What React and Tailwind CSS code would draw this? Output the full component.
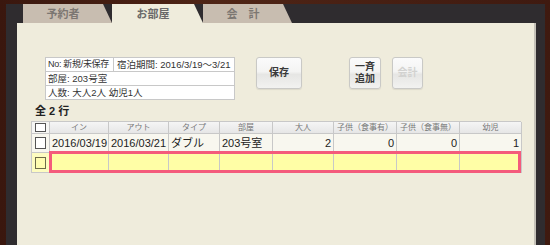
import React from "react";

const font = { fontFamily: '"Liberation Sans", "Noto Sans CJK JP", sans-serif' };

function Tab({ children, active, className = "" }) {
  return (
    <div
      className={
        "h-[19px] flex items-center justify-center text-[11px] font-bold [clip-path:polygon(0_0,calc(100%-9px)_0,100%_100%,0_100%)] " +
        (active ? "bg-[#efecdc] text-[#6a6a6a] " : "bg-[#c8bdb0] text-[#7c7772] ") +
        className
      }
    >
      <span className="pr-[9px] pt-[1px]">{children}</span>
    </div>
  );
}

function Btn({ children, disabled, className = "" }) {
  return (
    <div
      className={
        "h-[32px] flex flex-col items-center justify-center rounded-[3px] border border-[#c9c9c6] bg-[linear-gradient(#fbfbfb_0%,#f4f4f3_45%,#e6e6e4_55%,#f2f2f0_100%)] text-[10px] font-bold leading-[12px] shadow-[0_1px_1px_rgba(0,0,0,0.08)] " +
        (disabled ? "text-[#d2d2d0] " : "text-[#3a3a3a] ") +
        className
      }
    >
      {children}
    </div>
  );
}

function Check({ yellow }) {
  return (
    <div
      className={
        "w-[11px] h-[12px] border " +
        (yellow ? "border-[#6d6b4a] bg-[#fffdb0]" : "border-[#555] bg-white")
      }
    />
  );
}

const cols = "grid grid-cols-[18px_59px_60px_51px_53px_61px_63px_63px_62px]";
const headers = ["イン", "アウト", "タイプ", "部屋", "大人", "子供（食事有）", "子供（食事無）", "幼児"];
const row = [
  { t: "2016/03/19", r: false },
  { t: "2016/03/21", r: false },
  { t: "ダブル", r: false },
  { t: "203号室", r: false },
  { t: "2", r: true },
  { t: "0", r: true },
  { t: "0", r: true },
  { t: "1", r: true },
];

export default function App() {
  return (
    <div style={font} className="w-[550px] h-[245px] overflow-hidden bg-[linear-gradient(90deg,#3a170e,#4f2516_40%,#3f1a10)] pt-[4px] pl-[6px] pr-[5px]">
      <div className="h-[300px] bg-[#2f2c2f] flex flex-col pr-[9px]">
        <div className="flex pl-[17px] h-[19px] shrink-0">
          <Tab className="w-[89px]">予約者</Tab>
          <Tab active className="w-[91px]">お部屋</Tab>
          <Tab className="w-[89px]">会　計</Tab>
        </div>
        <div className="ml-[11px] flex-1 bg-[#efecdc] border-r-2 border-[#c4c1b8] pl-[14px] pt-[34px]">
          <div className="flex items-start ml-[14px]">
            <div className="w-[190px] border border-[#c8c8c8] bg-white text-[9.5px] text-[#333] leading-[13px]">
              <div className="flex border-b border-[#c8c8c8] h-[14px]">
                <div className="w-[68px] border-r border-[#c8c8c8] pl-[2px] whitespace-nowrap text-[9px] tracking-[-0.3px]">No: 新規/未保存</div>
                <div className="flex-1 pl-[3px] whitespace-nowrap overflow-hidden">宿泊期間: 2016/3/19～3/21</div>
              </div>
              <div className="border-b border-[#c8c8c8] h-[14px] pl-[2px]">部屋: 203号室</div>
              <div className="h-[13px] pl-[2px]">人数: 大人2人 幼児1人</div>
            </div>
            <Btn className="ml-[21px] w-[46px]">保存</Btn>
            <Btn className="ml-[47px] w-[32px]">
              <span>一斉</span>
              <span>追加</span>
            </Btn>
            <Btn disabled className="ml-[11px] w-[31px]">会計</Btn>
          </div>
          <div className="mt-[4px] h-[14px] leading-[14px] pl-[4px] text-[11px] font-bold text-[#222] whitespace-pre">全 2 行</div>
          <div className="relative mt-[3px] w-[490px]">
            <div className={cols + " border-l border-t border-[#c8c8c8]"}>
              <div className="h-[12px] border-r border-b border-[#c8c8c8] bg-[#f6f6f4] flex items-center justify-center">
                <div className="w-[11px] h-[9px] border border-[#555] bg-white" />
              </div>
              {headers.map((h) => (
                <div key={h} className="h-[12px] border-r border-b border-[#c8c8c8] bg-[linear-gradient(#f5f5f5,#e6e6e6)] text-[8px] leading-[11px] text-[#777] text-center whitespace-nowrap overflow-hidden">
                  {h}
                </div>
              ))}
              <div className="h-[19px] border-r border-b border-[#c8c8c8] bg-[#f8f7ef] flex items-center justify-center">
                <Check />
              </div>
              {row.map((c, i) => (
                <div
                  key={i}
                  className={
                    "h-[19px] border-r border-b border-[#c8c8c8] bg-[#f8f7ef] text-[11px] leading-[18px] text-[#222] px-[2px] whitespace-nowrap overflow-hidden " +
                    (c.r ? "text-right" : "text-left")
                  }
                >
                  {c.t}
                </div>
              ))}
              <div className="h-[20px] border-r border-b border-[#c8c8c8] bg-[#fdfcc0] flex items-center justify-center">
                <Check yellow />
              </div>
              {row.map((c, i) => (
                <div key={i} className="h-[20px] border-r border-b border-[#c8c8c8] bg-[#fffea6]" />
              ))}
            </div>
            <div className="absolute left-[18px] top-[30px] w-[472px] h-[22px] border-[3px] border-[#f45b7c]" />
          </div>
        </div>
      </div>
    </div>
  );
}
